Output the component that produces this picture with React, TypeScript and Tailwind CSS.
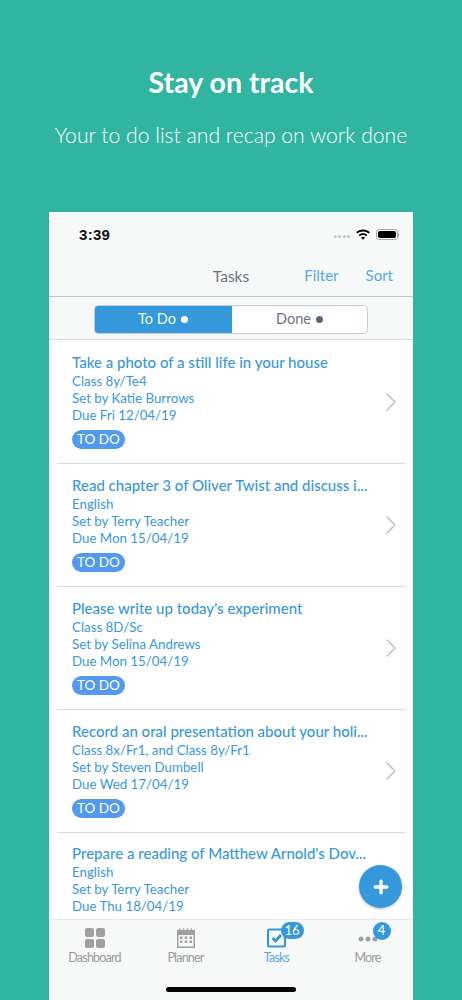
import { ChevronRight, Plus } from "lucide-react";

const FONT = "font-['Lato','Noto_Sans',sans-serif]";

type Task = {
  title: string;
  group: string;
  setBy: string;
  due: string;
};

const tasks: Task[] = [
  {
    title: "Take a photo of a still life in your house",
    group: "Class 8y/Te4",
    setBy: "Set by Katie Burrows",
    due: "Due Fri 12/04/19",
  },
  {
    title: "Read chapter 3 of Oliver Twist and discuss i...",
    group: "English",
    setBy: "Set by Terry Teacher",
    due: "Due Mon 15/04/19",
  },
  {
    title: "Please write up today's experiment",
    group: "Class 8D/Sc",
    setBy: "Set by Selina Andrews",
    due: "Due Mon 15/04/19",
  },
  {
    title: "Record an oral presentation about your holi...",
    group: "Class 8x/Fr1, and Class 8y/Fr1",
    setBy: "Set by Steven Dumbell",
    due: "Due Wed 17/04/19",
  },
];

function TaskRow({ task }: { task: Task }) {
  return (
    <div className="ml-2 mr-2 flex h-[123px] items-center border-b border-[#d5dbe3] pl-[15px]">
      <div className="min-w-0 flex-1 pb-[5px] text-[#3a97dc]">
        <p className="h-[22px] whitespace-nowrap text-[15px] font-medium leading-[24px]">{task.title}</p>
        <p className="h-[17px] text-[13.3px] leading-[18px]">{task.group}</p>
        <p className="h-[17px] text-[13.3px] leading-[18px]">{task.setBy}</p>
        <p className="h-[17px] text-[13.3px] leading-[18px]">{task.due}</p>
        <span className="mt-[7px] flex h-[19px] w-[53px] items-center justify-center rounded-full bg-[#5399ee] text-[13.5px] text-white">
          TO DO
        </span>
      </div>
      <ChevronRight className="-mr-[1.5px] size-[32px] shrink-0 text-[#b9c0cf]" strokeWidth={1.2} />
    </div>
  );
}

function WifiIcon() {
  return (
    <svg width="16" height="12" viewBox="0 0 16 12" fill="#000">
      <path d="M8 2.4c2.2 0 4.2.8 5.7 2.2l1.2-1.3C13.100 1.600 10.700.6 8 .6S2.900 1.600 1.100 3.300l1.200 1.300C3.800 3.200 5.800 2.400 8 2.400z" />
      <path d="M8 6c1.200 0 2.300.5 3.200 1.200l1.200-1.300C11.200 4.900 9.700 4.200 8 4.200s-3.200.7-4.400 1.700l1.200 1.300C5.700 6.500 6.800 6 8 6z" />
      <path d="M8 7.800c-.8 0-1.500.3-2 .8L8 10.800l2-2.200c-.5-.5-1.200-.8-2-.8z" />
    </svg>
  );
}

function StatusBar() {
  return (
    <div className="flex h-[44px] items-center justify-between pl-[30px] pr-[14px] pt-[1px] font-['Liberation_Sans',sans-serif]">
      <span className="text-[15px] font-bold leading-none tracking-[0.3px] text-[#111]">3:39</span>
      <div className="flex items-center">
        <div className="mr-[5px] mt-[3px] flex gap-[1.5px]">
          <span className="size-[3px] rounded-full bg-[#c4c4c4]" />
          <span className="size-[3px] rounded-full bg-[#c4c4c4]" />
          <span className="size-[3px] rounded-full bg-[#c4c4c4]" />
          <span className="size-[3px] rounded-full bg-[#c4c4c4]" />
        </div>
        <WifiIcon />
        <div className="ml-[5px] flex items-center">
          <div className="h-[11px] w-[22px] rounded-[3px] border border-[#aaa] p-[1px]">
            <div className="h-full w-full rounded-[2px] bg-black" />
          </div>
          <div className="h-[4px] w-[1px] bg-[#aaa]" />
        </div>
      </div>
    </div>
  );
}

function NavBar() {
  return (
    <div className="relative flex h-[41px] items-center justify-end gap-[27px] border-b border-[#c3c6d1] pb-[2px] pr-[20px] text-[15px] text-[#5aa9e6]">
      <span className="absolute inset-x-0 top-[9px] text-center text-[15.5px] text-[#6d7280]">Tasks</span>
      <span>Filter</span>
      <span>Sort</span>
    </div>
  );
}

function SegmentBar() {
  return (
    <div className="flex h-[43px] items-center justify-center border-b border-[#d5dbe3] pt-[2px]">
      <div className="flex h-[29px] w-[274px] overflow-hidden rounded-[4px] border border-[#c3cbdc] bg-white text-[14.5px]">
        <div className="-my-[1px] -ml-[1px] flex w-[138px] items-center justify-center gap-[5px] bg-[#3498db] text-white/90">
          To Do <span className="size-[7px] rounded-full bg-white" />
        </div>
        <div className="flex flex-1 items-center justify-center gap-[5px] text-[#6d7280]">
          Done <span className="size-[7px] rounded-full bg-[#5f6672]" />
        </div>
      </div>
    </div>
  );
}

function DashboardIcon() {
  return (
    <svg width="20" height="20" viewBox="0 0 20 20" fill="#a0a0a0">
      <rect x="0" y="0" width="9" height="9" rx="2" />
      <rect x="11" y="0" width="9" height="9" rx="2" />
      <rect x="0" y="11" width="9" height="9" rx="2" />
      <rect x="11" y="11" width="9" height="9" rx="2" />
    </svg>
  );
}

function PlannerIcon() {
  return (
    <svg width="20" height="20" viewBox="0 0 20 20" fill="#a0a0a0">
      <path
        fillRule="evenodd"
        d="M1 2h2V0.500h1.500V2h2.250V0.500h1.500V2h2.500V0.500h1.500V2h2.250V0.500H16V2h3v18H1V2zM2.500 7v11.500h15V7h-15z"
      />
      <rect x="4" y="8.500" width="2.500" height="2.500" />
      <rect x="8.750" y="8.500" width="2.500" height="2.500" />
      <rect x="13.500" y="8.500" width="2.500" height="2.500" />
      <rect x="4" y="12.500" width="2.500" height="2.500" />
      <rect x="8.750" y="12.500" width="2.500" height="2.500" />
      <rect x="13.500" y="12.500" width="2.500" height="2.500" />
    </svg>
  );
}

function TasksIcon() {
  return (
    <svg width="20" height="20" viewBox="0 0 20 20" fill="none">
      <rect x="1" y="1.500" width="17" height="17" rx="1.500" stroke="#3498db" strokeWidth="2.200" />
      <path d="M5.500 10l3 3 5.500-6" stroke="#3498db" strokeWidth="2.800" />
    </svg>
  );
}

function MoreIcon() {
  return (
    <svg width="20" height="20" viewBox="0 0 20 20" fill="#a0a0a0">
      <circle cx="3" cy="11" r="2.500" />
      <circle cx="10" cy="11" r="2.500" />
      <circle cx="17" cy="11" r="2.500" />
    </svg>
  );
}

function TabItem({
  icon,
  label,
  active,
  badge,
  badgeClass,
}: {
  icon: React.ReactNode;
  label: string;
  active?: boolean;
  badge?: string;
  badgeClass?: string;
}) {
  return (
    <div className="flex flex-1 flex-col items-center pt-[8px]">
      <div className="relative h-[20px] w-[20px]">
        {icon}
        {badge ? (
          <span
            className={`absolute -top-[6px] flex items-center justify-center rounded-full bg-[#3498db] text-[13px] text-white ${badgeClass}`}
          >
            {badge}
          </span>
        ) : null}
      </div>
      <span
        className={`mt-[1px] text-[12.5px] leading-[17px] tracking-[-0.8px] ${active ? "text-[#5aa9e6]" : "text-[#9b9b9b]"}`}
      >
        {label}
      </span>
    </div>
  );
}

function TabBar() {
  return (
    <div className="relative h-[81px] shrink-0 border-t border-[#e6e8ea] bg-[#f7f8f8]">
      <div className="flex">
        <TabItem icon={<DashboardIcon />} label="Dashboard" />
        <TabItem icon={<PlannerIcon />} label="Planner" />
        <TabItem
          icon={<TasksIcon />}
          label="Tasks"
          active
          badge="16"
          badgeClass="left-[14px] h-[17px] w-[23px]"
        />
        <TabItem
          icon={<MoreIcon />}
          label="More"
          badge="4"
          badgeClass="left-[15px] h-[18px] w-[18px]"
        />
      </div>
      <div className="absolute bottom-[8px] left-[117px] h-[5px] w-[130px] rounded-full bg-black" />
    </div>
  );
}

export default function App() {
  return (
    <div className={`flex h-[1000px] w-[462px] flex-col overflow-hidden bg-[#31b5a1] ${FONT}`}>
      <div className="h-[212px] shrink-0 pt-[64px] text-center text-white">
        <h1 className="text-[28.5px] font-bold leading-[36px]">Stay on track</h1>
        <p className="mt-[21px] whitespace-nowrap text-[21.15px] font-light leading-[28px]">
          Your to do list and recap on work done
        </p>
      </div>

      <div className="relative mx-[49px] flex min-h-0 flex-1 flex-col bg-white">
        <div className="shrink-0 bg-[#f7f8f8]">
          <StatusBar />
          <NavBar />
          <SegmentBar />
        </div>

        <div className="min-h-0 flex-1 overflow-hidden pt-[1px]">
          {tasks.map((task) => (
            <TaskRow key={task.title} task={task} />
          ))}
          <div className="ml-2 pl-[15px] pt-[8px] text-[#3a97dc]">
            <p className="h-[22px] whitespace-nowrap text-[15px] font-medium leading-[24px]">
              Prepare a reading of Matthew Arnold's Dov...
            </p>
            <p className="h-[17px] text-[13.3px] leading-[18px]">English</p>
            <p className="h-[17px] text-[13.3px] leading-[18px]">Set by Terry Teacher</p>
            <p className="h-[17px] text-[13.3px] leading-[18px]">Due Thu 18/04/19</p>
          </div>
        </div>

        <div className="absolute bottom-[92px] right-[11px] flex size-[43px] items-center justify-center rounded-full bg-[#3498db] shadow-[0_1px_3px_rgba(0,0,0,0.25)]">
          <Plus className="size-[20px] text-white" strokeWidth={4} />
        </div>

        <TabBar />
      </div>
    </div>
  );
}
